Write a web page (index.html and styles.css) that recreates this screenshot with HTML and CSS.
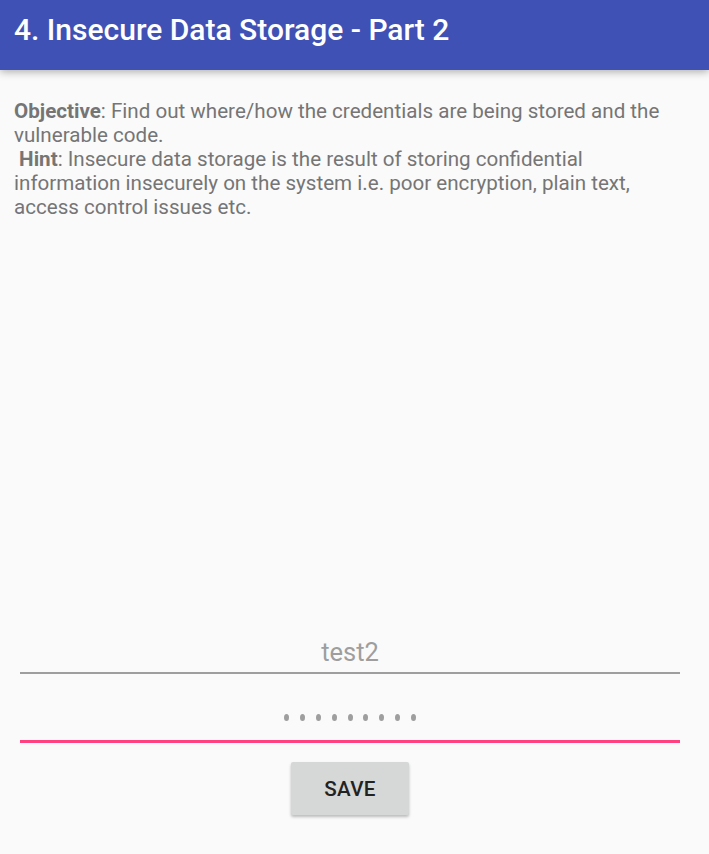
FILE: index.html
```html
<!DOCTYPE html>
<html>
<head>
<meta charset="utf-8">
<link rel="stylesheet" href="styles.css">
</head>
<body>
<div class="screen">
  <header class="appbar"><h1 class="title">4. Insecure Data Storage - Part 2</h1></header>
  <div class="desc">
    <b>Objective</b>: Find out where/how the credentials are being stored and the vulnerable code.<br>
    &nbsp;<b>Hint</b>: Insecure data storage is the result of storing confidential information insecurely on the system i.e. poor encryption, plain text, access control issues etc.
  </div>
  <div class="spacer"></div>
  <div class="form">
    <div class="field user"><span class="value">test2</span></div>
    <div class="field pass">
      <span class="dots"><i></i><i></i><i></i><i></i><i></i><i></i><i></i><i></i><i></i></span>
    </div>
  </div>
  <div class="actions"><button class="btn">SAVE</button></div>
</div>
</body>
</html>
```
FILE: styles.css
```css
html, body { margin: 0; padding: 0; }
body { background: #fafafa; font-family: Roboto, "Noto Sans", sans-serif; }
.screen { height: 854px; display: flex; flex-direction: column; }
.appbar {
  height: 70px; background: #3f51b5; flex: none;
  box-shadow: 0 2px 8px rgba(0,0,0,0.3);
  display: flex; align-items: flex-start; padding-left: 14px;
  position: relative; z-index: 1;
}
.title { margin: 0; padding-top: 11px; color: #fff; font-size: 30px; font-weight: 500; line-height: 38px; }
.desc { margin: 29px 22px 0 14px; color: #757575; font-size: 20.6px; line-height: 24px; }
.desc b { font-weight: 700; }
.spacer { flex: 1; }
.form { margin: 0 29px 0 20px; }
.field { display: flex; justify-content: center; align-items: center; }
.user { height: 44px; border-bottom: 2px solid #9e9e9e; align-items: flex-start; }
.user .value { color: #9e9e9e; font-size: 25.5px; line-height: 30px; margin-top: 9px; }
.pass { height: 66px; border-bottom: 3px solid #ff4081; align-items: flex-end; }
.dots { display: flex; gap: 10.9px; margin-bottom: 19px; }
.dots i { display: block; width: 5px; height: 7px; border-radius: 50%; background: #9e9e9e; }
.actions { display: flex; justify-content: center; margin: 19px 0 39px 0; padding-right: 9px; }
.btn {
  width: 118px; height: 53px; border: none; border-radius: 2px;
  background: #d6d7d7; color: #222; font-family: Roboto, sans-serif;
  font-size: 20.6px; font-weight: 500; letter-spacing: 0.3px;
  box-shadow: 0 2px 3px rgba(0,0,0,0.25);
}
```
